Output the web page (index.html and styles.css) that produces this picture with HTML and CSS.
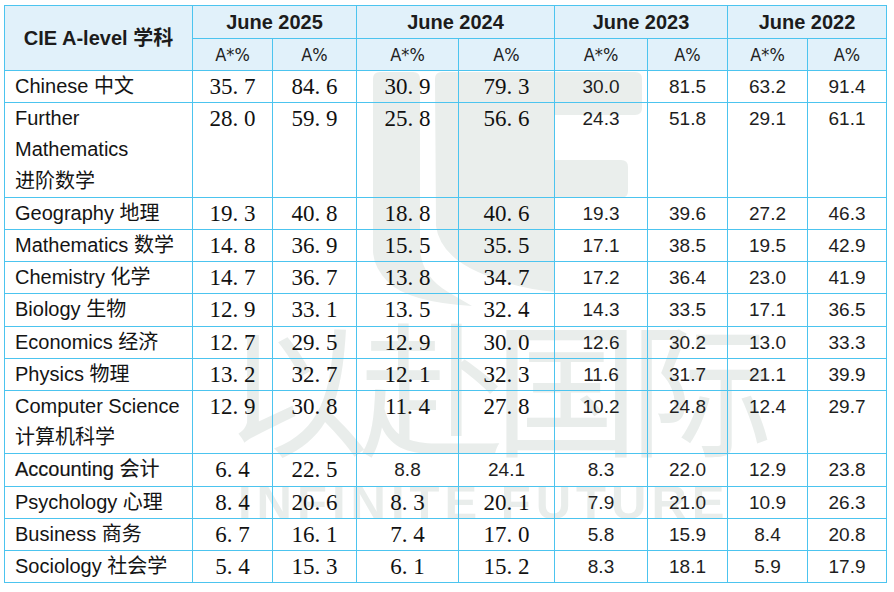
FILE: index.html
```html
<!DOCTYPE html>
<html lang="zh-CN">
<head>
<meta charset="utf-8">
<title>CIE A-level 学科</title>
<link rel="stylesheet" href="styles.css">
</head>
<body>
<div class="page">
  <svg class="logo" width="894" height="592" viewBox="0 0 894 592" aria-hidden="true">
    <path d="M373 79 Q373 72 380 72 L413 72 Q420 72 420 79 L420 248 Q421 276 448 292 L472 306 Q408 302 388 282 Q373 267 373 250 Z"/>
    <path d="M442 72 L635 72 Q642 72 642 79 L642 108 Q642 115 635 115 L555 115 L555 160 L621 160 Q628 160 628 167 L628 191 Q628 198 621 198 L555 198 L555 292 Q512 288 478 272 Q440 255 436 226 L435 79 Q435 72 442 72 Z"/>
  </svg>
  <div class="wm-cn">以赴国际</div>
  <div class="wm-en">INFINITE FUTURE</div>

  <table class="grid">
    <colgroup>
      <col class="c-subj">
      <col class="c80"><col class="c84">
      <col class="c102"><col class="c96">
      <col class="c93"><col class="c80">
      <col class="c80"><col class="c79">
    </colgroup>
    <thead>
      <tr class="h1">
        <th rowspan="2" class="subj-h">CIE A-level 学科</th>
        <th colspan="2">June 2025</th>
        <th colspan="2">June 2024</th>
        <th colspan="2">June 2023</th>
        <th colspan="2">June 2022</th>
      </tr>
      <tr class="h2">
        <th class="sub">A*%</th><th class="sub">A%</th>
        <th class="sub">A*%</th><th class="sub">A%</th>
        <th class="sub">A*%</th><th class="sub">A%</th>
        <th class="sub">A*%</th><th class="sub">A%</th>
      </tr>
    </thead>
    <tbody>
      <tr>
        <td class="subj">Chinese 中文</td>
        <td class="sf">35<span class="dot">.</span>7</td><td class="sf">84<span class="dot">.</span>6</td>
        <td class="sf">30<span class="dot">.</span>9</td><td class="sf">79<span class="dot">.</span>3</td>
        <td class="ss">30.0</td><td class="ss">81.5</td><td class="ss">63.2</td><td class="ss">91.4</td>
      </tr>
      <tr>
        <td class="subj">Further<br>Mathematics<br>进阶数学</td>
        <td class="sf">28<span class="dot">.</span>0</td><td class="sf">59<span class="dot">.</span>9</td>
        <td class="sf">25<span class="dot">.</span>8</td><td class="sf">56<span class="dot">.</span>6</td>
        <td class="ss">24.3</td><td class="ss">51.8</td><td class="ss">29.1</td><td class="ss">61.1</td>
      </tr>
      <tr>
        <td class="subj">Geography 地理</td>
        <td class="sf">19<span class="dot">.</span>3</td><td class="sf">40<span class="dot">.</span>8</td>
        <td class="sf">18<span class="dot">.</span>8</td><td class="sf">40<span class="dot">.</span>6</td>
        <td class="ss">19.3</td><td class="ss">39.6</td><td class="ss">27.2</td><td class="ss">46.3</td>
      </tr>
      <tr>
        <td class="subj">Mathematics 数学</td>
        <td class="sf">14<span class="dot">.</span>8</td><td class="sf">36<span class="dot">.</span>9</td>
        <td class="sf">15<span class="dot">.</span>5</td><td class="sf">35<span class="dot">.</span>5</td>
        <td class="ss">17.1</td><td class="ss">38.5</td><td class="ss">19.5</td><td class="ss">42.9</td>
      </tr>
      <tr>
        <td class="subj">Chemistry 化学</td>
        <td class="sf">14<span class="dot">.</span>7</td><td class="sf">36<span class="dot">.</span>7</td>
        <td class="sf">13<span class="dot">.</span>8</td><td class="sf">34<span class="dot">.</span>7</td>
        <td class="ss">17.2</td><td class="ss">36.4</td><td class="ss">23.0</td><td class="ss">41.9</td>
      </tr>
      <tr>
        <td class="subj">Biology 生物</td>
        <td class="sf">12<span class="dot">.</span>9</td><td class="sf">33<span class="dot">.</span>1</td>
        <td class="sf">13<span class="dot">.</span>5</td><td class="sf">32<span class="dot">.</span>4</td>
        <td class="ss">14.3</td><td class="ss">33.5</td><td class="ss">17.1</td><td class="ss">36.5</td>
      </tr>
      <tr>
        <td class="subj">Economics 经济</td>
        <td class="sf">12<span class="dot">.</span>7</td><td class="sf">29<span class="dot">.</span>5</td>
        <td class="sf">12<span class="dot">.</span>9</td><td class="sf">30<span class="dot">.</span>0</td>
        <td class="ss">12.6</td><td class="ss">30.2</td><td class="ss">13.0</td><td class="ss">33.3</td>
      </tr>
      <tr>
        <td class="subj">Physics 物理</td>
        <td class="sf">13<span class="dot">.</span>2</td><td class="sf">32<span class="dot">.</span>7</td>
        <td class="sf">12<span class="dot">.</span>1</td><td class="sf">32<span class="dot">.</span>3</td>
        <td class="ss">11.6</td><td class="ss">31.7</td><td class="ss">21.1</td><td class="ss">39.9</td>
      </tr>
      <tr>
        <td class="subj">Computer Science<br>计算机科学</td>
        <td class="sf">12<span class="dot">.</span>9</td><td class="sf">30<span class="dot">.</span>8</td>
        <td class="sf">11<span class="dot">.</span>4</td><td class="sf">27<span class="dot">.</span>8</td>
        <td class="ss">10.2</td><td class="ss">24.8</td><td class="ss">12.4</td><td class="ss">29.7</td>
      </tr>
      <tr>
        <td class="subj heavy">Accounting 会计</td>
        <td class="sf">6<span class="dot">.</span>4</td><td class="sf">22<span class="dot">.</span>5</td>
        <td class="ss">8.8</td><td class="ss">24.1</td>
        <td class="ss">8.3</td><td class="ss">22.0</td><td class="ss">12.9</td><td class="ss">23.8</td>
      </tr>
      <tr>
        <td class="subj">Psychology 心理</td>
        <td class="sf">8<span class="dot">.</span>4</td><td class="sf">20<span class="dot">.</span>6</td>
        <td class="sf">8<span class="dot">.</span>3</td><td class="sf">20<span class="dot">.</span>1</td>
        <td class="ss">7.9</td><td class="ss">21.0</td><td class="ss">10.9</td><td class="ss">26.3</td>
      </tr>
      <tr>
        <td class="subj">Business 商务</td>
        <td class="sf">6<span class="dot">.</span>7</td><td class="sf">16<span class="dot">.</span>1</td>
        <td class="sf">7<span class="dot">.</span>4</td><td class="sf">17<span class="dot">.</span>0</td>
        <td class="ss">5.8</td><td class="ss">15.9</td><td class="ss">8.4</td><td class="ss">20.8</td>
      </tr>
      <tr>
        <td class="subj">Sociology 社会学</td>
        <td class="sf">5<span class="dot">.</span>4</td><td class="sf">15<span class="dot">.</span>3</td>
        <td class="sf">6<span class="dot">.</span>1</td><td class="sf">15<span class="dot">.</span>2</td>
        <td class="ss">8.3</td><td class="ss">18.1</td><td class="ss">5.9</td><td class="ss">17.9</td>
      </tr>
    </tbody>
  </table>
</div>
</body>
</html>
```

FILE: styles.css
```css
html, body {
  margin: 0;
  padding: 0;
  background: #ffffff;
}

.page {
  position: relative;
  width: 894px;
  height: 592px;
  box-sizing: border-box;
  padding: 5px 0 0 4px;
  overflow: hidden;
  font-family: "Liberation Sans", "Noto Sans CJK SC", sans-serif;
  color: #141414;
}

/* watermark layers */
.logo {
  position: absolute;
  left: 0;
  top: 0;
  fill: #eaeeec;
}

.wm-cn {
  position: absolute;
  left: 224px;
  top: 311px;
  font-family: "Noto Sans CJK SC", sans-serif;
  font-weight: 400;
  font-size: 145px;
  line-height: 145px;
  letter-spacing: -10px;
  color: #e9edeb;
  white-space: nowrap;
}

.wm-en {
  position: absolute;
  left: 238px;
  top: 474px;
  font-family: "Liberation Sans", sans-serif;
  font-weight: 700;
  font-size: 49px;
  line-height: 56px;
  letter-spacing: 5px;
  color: #e9edeb;
  white-space: nowrap;
}

/* table */
.grid {
  position: relative;
  border-collapse: collapse;
  table-layout: fixed;
}

.c-subj { width: 188px; }
.c80 { width: 80px; }
.c84 { width: 84px; }
.c102 { width: 102px; }
.c96 { width: 96px; }
.c93 { width: 93px; }
.c79 { width: 79px; }

.grid th,
.grid td {
  border: 1px solid #4cc4ef;
  padding: 0;
}

.grid th {
  background: #e1f1fa;
  color: #1c1c1c;
  font-weight: 700;
  font-size: 20px;
  text-align: center;
  vertical-align: middle;
}

.h1 th {
  height: 32px;
  line-height: 32px;
}

.h2 th {
  height: 31px;
  line-height: 31px;
}

.grid th.subj-h {
  line-height: 24px;
}

.grid th.sub {
  font-family: "Liberation Sans Narrow", "DejaVu Sans Condensed", "Liberation Sans", sans-serif;
  font-weight: 400;
  font-size: 18px;
  color: #222;
}

.grid td {
  vertical-align: top;
  line-height: 31.2px;
  text-align: center;
  white-space: nowrap;
}

.grid td.subj {
  text-align: left;
  padding-left: 10px;
  font-size: 20px;
  color: #141414;
}

.grid td.heavy {
  -webkit-text-stroke: 0.15px #141414;
}

.grid td.sf {
  font-family: "Liberation Serif", serif;
  font-size: 23px;
  color: #111;
}

.dot {
  display: inline-block;
  width: 0.5em;
  text-align: left;
}

.grid td.ss {
  font-family: "Liberation Sans", sans-serif;
  font-size: 19px;
  color: #1e1e1e;
}
```
